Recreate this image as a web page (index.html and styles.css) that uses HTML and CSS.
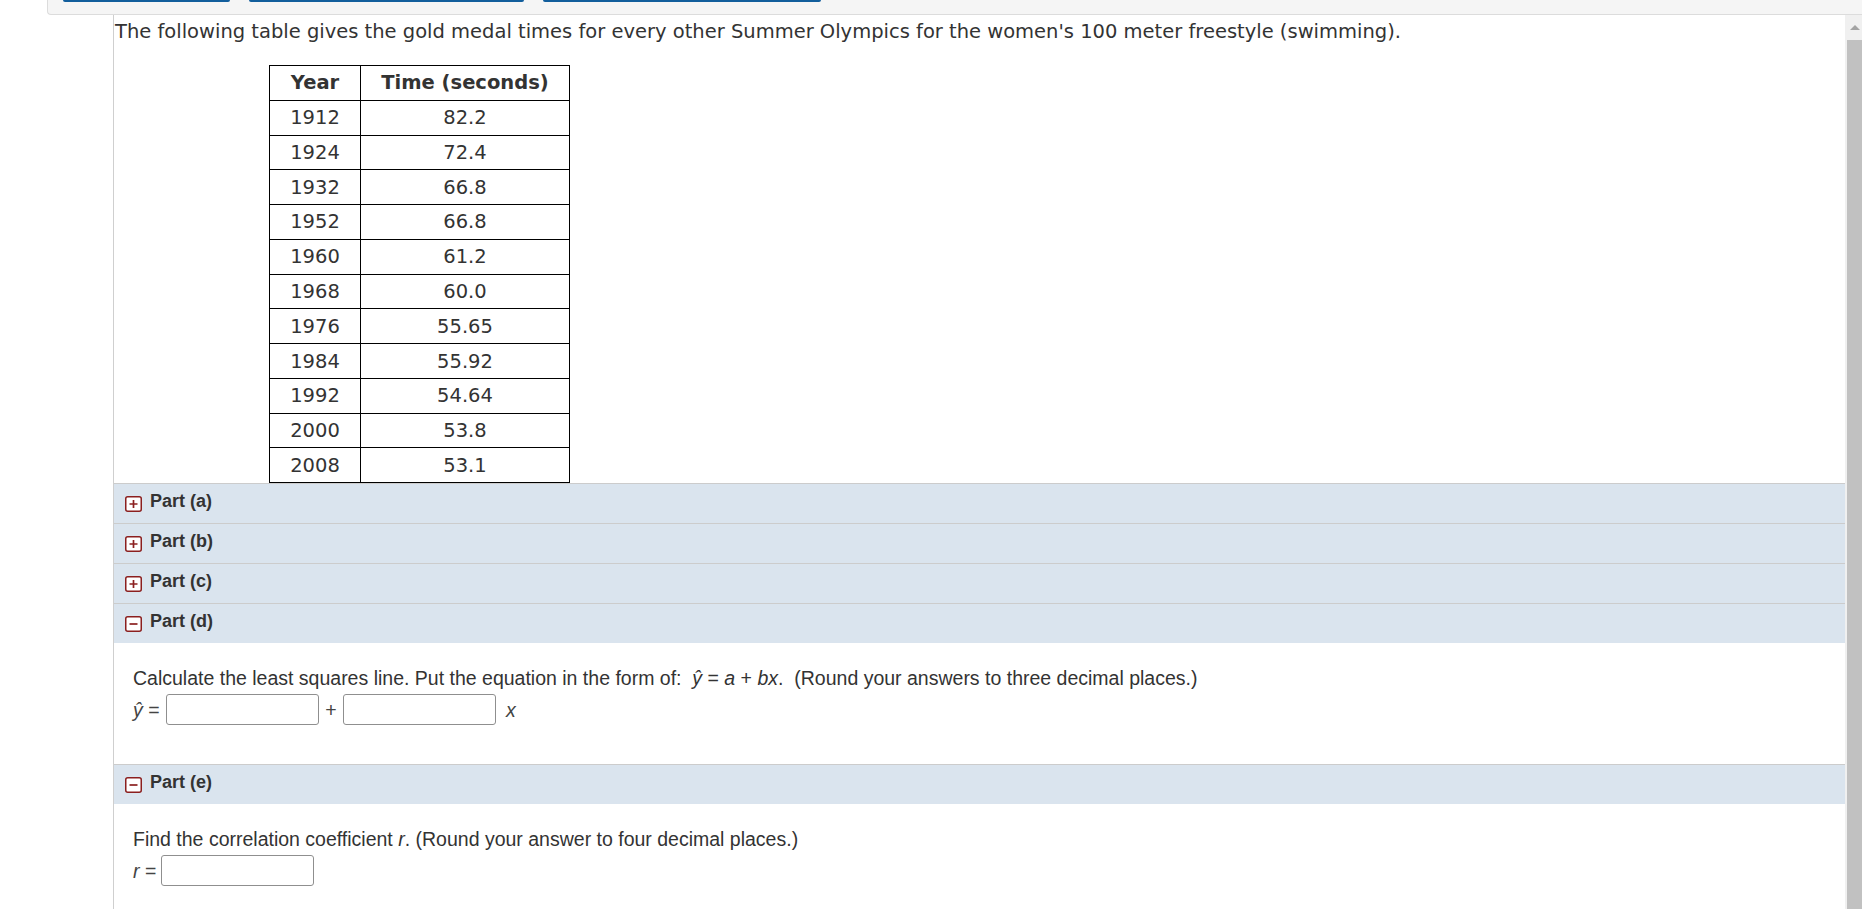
FILE: index.html
```html
<!DOCTYPE html>
<html>
<head>
<meta charset="utf-8">
<link rel="stylesheet" href="styles.css">
</head>
<body>
<div class="topbar">
  <div class="topbar-gap"></div>
  <div class="toolbar">
    <span class="tbtn tbtn-1"></span>
    <span class="tbtn tbtn-2"></span>
    <span class="tbtn tbtn-3"></span>
  </div>
</div>
<div class="main">
  <div class="gutter"></div>
  <div class="content">
    <p class="intro">The following table gives the gold medal times for every other Summer Olympics for the women's 100 meter freestyle (swimming).</p>
    <table class="data">
      <thead>
        <tr><th class="c-year">Year</th><th class="c-time">Time (seconds)</th></tr>
      </thead>
      <tbody>
        <tr><td>1912</td><td>82.2</td></tr>
        <tr><td>1924</td><td>72.4</td></tr>
        <tr><td>1932</td><td>66.8</td></tr>
        <tr><td>1952</td><td>66.8</td></tr>
        <tr><td>1960</td><td>61.2</td></tr>
        <tr><td>1968</td><td>60.0</td></tr>
        <tr><td>1976</td><td>55.65</td></tr>
        <tr><td>1984</td><td>55.92</td></tr>
        <tr><td>1992</td><td>54.64</td></tr>
        <tr><td>2000</td><td>53.8</td></tr>
        <tr><td>2008</td><td>53.1</td></tr>
      </tbody>
    </table>

    <div class="part-head">
      <svg class="pbox" width="17" height="16" viewBox="0 0 17 16"><rect x="0.75" y="0.75" width="15.5" height="14.5" rx="2" fill="#fff" stroke="#8b1f1f" stroke-width="1.5"/><path d="M4.5 8h8M8.5 4v8" stroke="#8b1f1f" stroke-width="1.7"/></svg>
      <span class="plabel">Part (a)</span>
    </div>
    <div class="part-head">
      <svg class="pbox" width="17" height="16" viewBox="0 0 17 16"><rect x="0.75" y="0.75" width="15.5" height="14.5" rx="2" fill="#fff" stroke="#8b1f1f" stroke-width="1.5"/><path d="M4.5 8h8M8.5 4v8" stroke="#8b1f1f" stroke-width="1.7"/></svg>
      <span class="plabel">Part (b)</span>
    </div>
    <div class="part-head">
      <svg class="pbox" width="17" height="16" viewBox="0 0 17 16"><rect x="0.75" y="0.75" width="15.5" height="14.5" rx="2" fill="#fff" stroke="#8b1f1f" stroke-width="1.5"/><path d="M4.5 8h8M8.5 4v8" stroke="#8b1f1f" stroke-width="1.7"/></svg>
      <span class="plabel">Part (c)</span>
    </div>
    <div class="part-head">
      <svg class="pbox" width="17" height="16" viewBox="0 0 17 16"><rect x="0.75" y="0.75" width="15.5" height="14.5" rx="2" fill="#fff" stroke="#8b1f1f" stroke-width="1.5"/><path d="M4.5 8h8" stroke="#8b1f1f" stroke-width="1.7"/></svg>
      <span class="plabel">Part (d)</span>
    </div>
    <div class="part-body">
      <div class="q">Calculate the least squares line. Put the equation in the form of:&nbsp; <i>ŷ</i> = <i>a</i> + <i>bx</i>.&nbsp; (Round your answers to three decimal places.)</div>
      <div class="ans">
        <span class="lhs"><i>ŷ</i> =</span>
        <span class="inp"></span>
        <span class="op">+</span>
        <span class="inp"></span>
        <i class="var">x</i>
      </div>
    </div>
    <div class="part-head">
      <svg class="pbox" width="17" height="16" viewBox="0 0 17 16"><rect x="0.75" y="0.75" width="15.5" height="14.5" rx="2" fill="#fff" stroke="#8b1f1f" stroke-width="1.5"/><path d="M4.5 8h8" stroke="#8b1f1f" stroke-width="1.7"/></svg>
      <span class="plabel">Part (e)</span>
    </div>
    <div class="part-body">
      <div class="q">Find the correlation coefficient <i>r</i>. (Round your answer to four decimal places.)</div>
      <div class="ans">
        <span class="lhs lhs-r"><i>r</i> =</span>
        <span class="inp"></span>
      </div>
    </div>
  </div>
  <div class="scrollbar">
    <div class="sb-arrow"><span class="tri"></span></div>
    <div class="sb-thumb"></div>
  </div>
</div>
</body>
</html>
```

FILE: styles.css
```css
html, body {
  margin: 0;
  padding: 0;
  background: #fff;
}
body {
  width: 1862px;
  height: 909px;
  overflow: hidden;
  font-family: "Liberation Sans", Arial, sans-serif;
  color: #333;
}

.topbar {
  display: flex;
  height: 15px;
}
.topbar-gap {
  width: 47px;
  flex: none;
}
.toolbar {
  flex: 1;
  display: flex;
  align-items: flex-start;
  gap: 19px;
  padding-left: 15px;
  background: #f5f5f5;
  border-left: 1px solid #dcdcdc;
  border-bottom: 1px solid #dcdcdc;
  border-bottom-left-radius: 4px;
  box-sizing: border-box;
}
.tbtn {
  display: block;
  height: 2px;
  background: #125e9c;
  border-radius: 0 0 3px 3px;
}
.tbtn-1 { width: 167px; }
.tbtn-2 { width: 275px; }
.tbtn-3 { width: 278px; }

.main {
  display: flex;
  height: 894px;
}
.gutter {
  width: 113px;
  flex: none;
}
.content {
  flex: 1;
  border-left: 1px solid #cfcfcf;
  min-width: 0;
}
.scrollbar {
  width: 17px;
  flex: none;
  background: #f0f0f0;
  display: flex;
  flex-direction: column;
}
.sb-arrow {
  height: 25px;
  display: flex;
  align-items: center;
  justify-content: center;
  padding-left: 3px;
}
.tri {
  width: 0;
  height: 0;
  border-left: 5px solid transparent;
  border-right: 5px solid transparent;
  border-bottom: 5px solid #a3a3a3;
}
.sb-thumb {
  flex: 1;
  margin-left: 2px;
  background: #c1c1c1;
}

.intro {
  margin: 0;
  padding: 5px 0 0 1px;
  font-family: "DejaVu Sans", Verdana, sans-serif;
  font-size: 19.5px;
  line-height: 23px;
  color: #333;
}

.data {
  margin: 22px 0 0 155px;
  border-collapse: collapse;
  font-family: "DejaVu Sans", Verdana, sans-serif;
  font-size: 19.5px;
  color: #333;
}
.data th, .data td {
  border: 1px solid #000;
  text-align: center;
  padding: 0;
  height: 33.78px;
  line-height: 23px;
}
.data th {
  font-weight: bold;
}
.c-year { width: 90px; }
.c-time { width: 208px; }

.part-head {
  display: flex;
  align-items: flex-start;
  border-top: 1px solid #cccccc;
  background: #dae4ee;
  padding: 7px 0 12px 11px;
  height: 20px;
}
.pbox {
  display: block;
  margin-top: 5px;
  flex: none;
}
.plabel {
  margin-left: 8px;
  font-weight: bold;
  font-size: 18px;
  line-height: 20px;
  color: #333;
}

.part-body {
  padding: 24px 0 39px 19px;
  font-size: 19.5px;
  color: #333;
}
.q {
  line-height: 22px;
}
.ans {
  display: flex;
  align-items: center;
  margin-top: 5px;
  line-height: 22px;
}
.lhs {
  width: 33px;
  color: #444;
}
.lhs-r {
  width: 28px;
}
.inp {
  display: block;
  width: 151px;
  height: 29px;
  border: 1px solid #8f8f8f;
  border-radius: 3px;
  background: #fff;
}
.op {
  width: 24px;
  text-align: center;
  color: #444;
}
.var {
  margin-left: 10px;
  color: #444;
}
```
